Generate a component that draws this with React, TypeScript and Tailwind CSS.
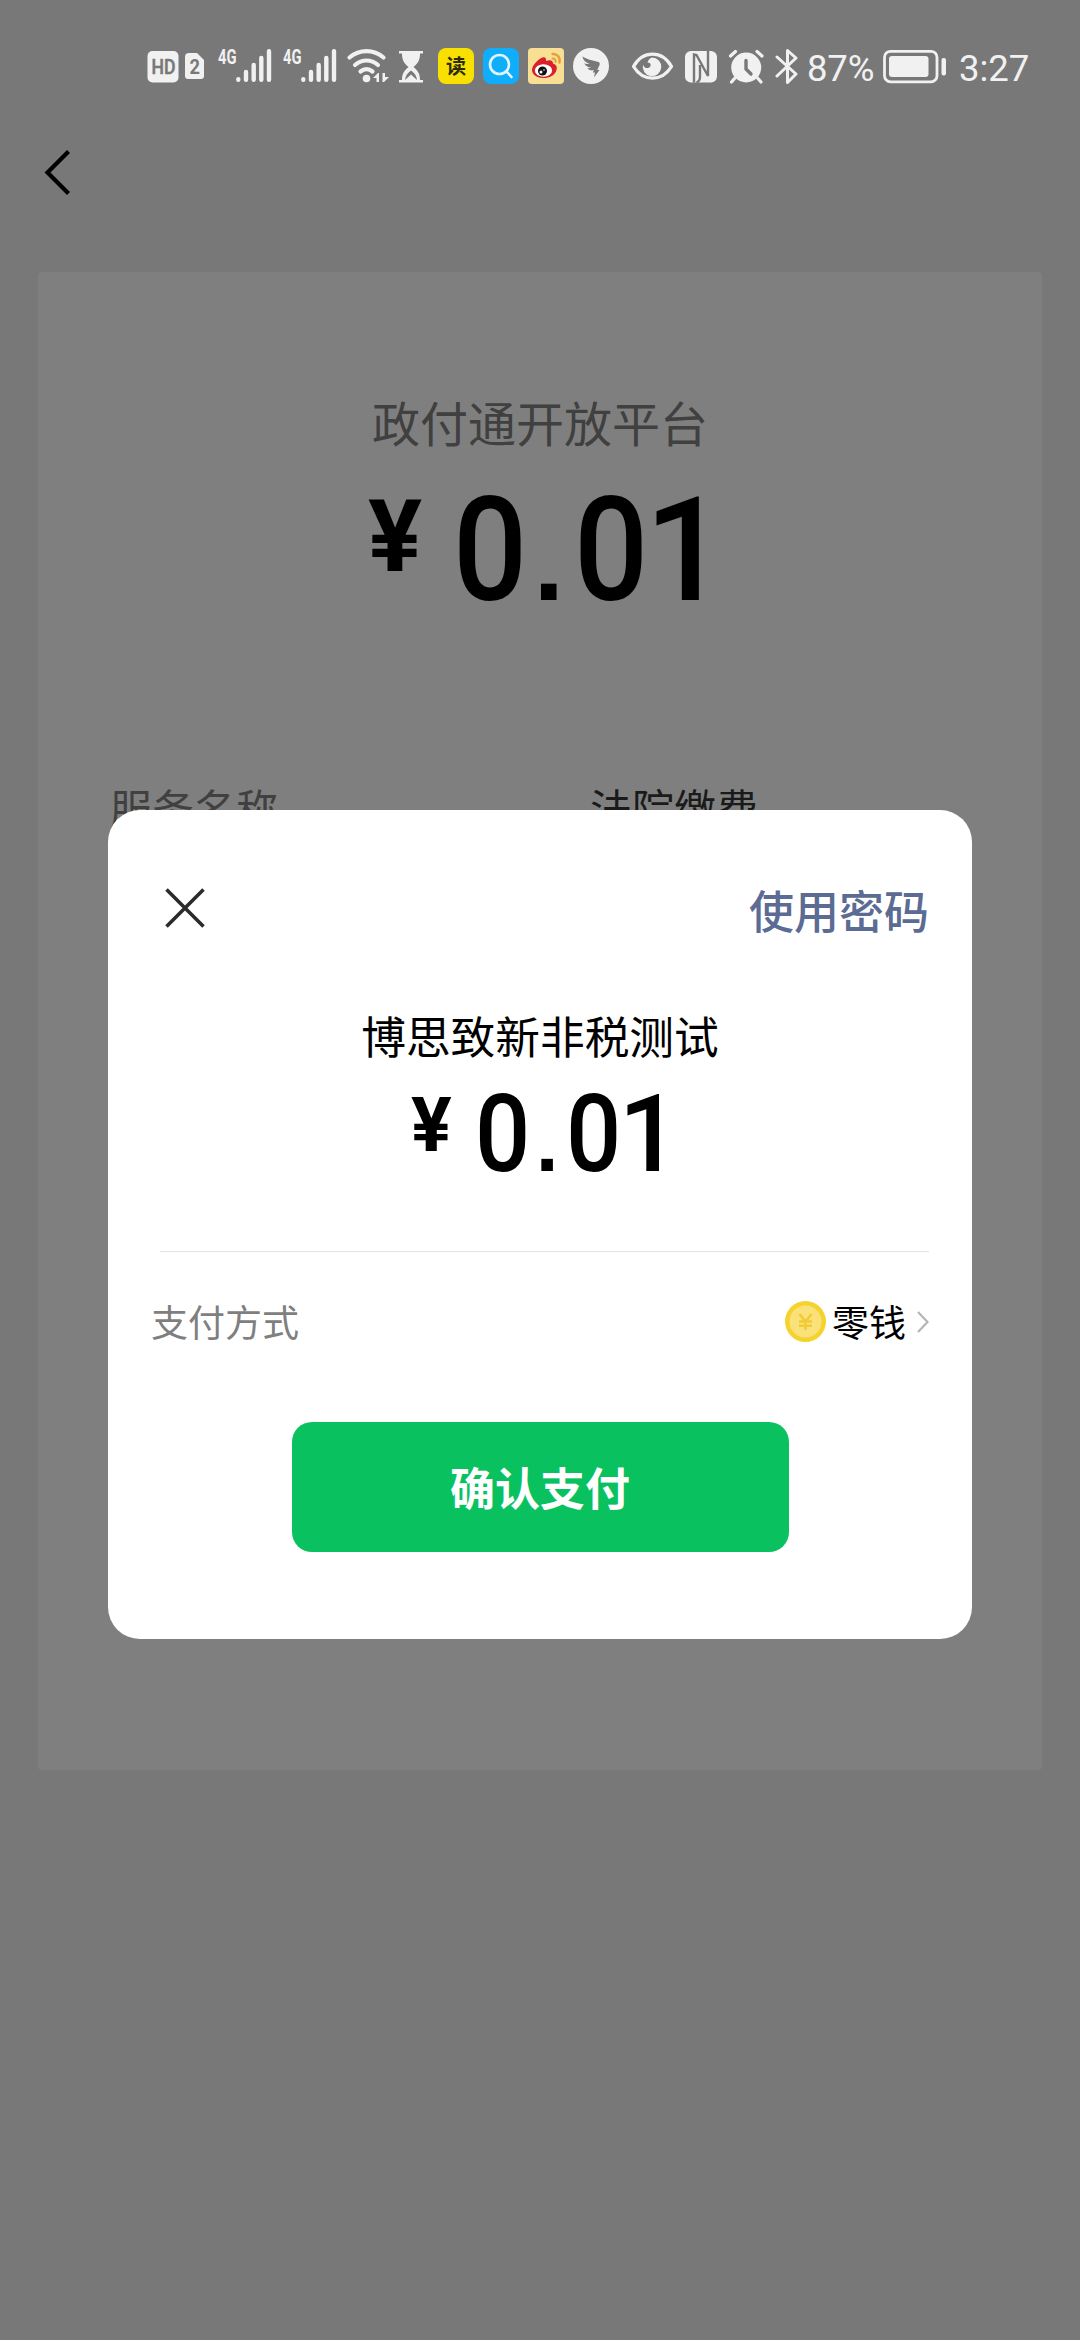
import type { ReactNode } from "react";

const cjk = "font-['Noto_Sans_CJK_SC',sans-serif]";
const latin = "font-[Roboto,'Noto_Sans',sans-serif]";

type IconProps = {
  className: string;
  box: string;
  children: ReactNode;
};

function StatusIcon({ className, box, children }: IconProps) {
  return (
    <svg className={`h-10 shrink-0 ${className}`} viewBox={box} fill="#f1f1f1">
      {children}
    </svg>
  );
}

function Signal({ className }: { className: string }) {
  return (
    <StatusIcon className={`w-[54px] ${className}`} box="0 0 54 40">
      <text
        x="0"
        y="18"
        fontSize="20"
        fontWeight="700"
        fontFamily="Roboto, sans-serif"
        textLength="18.5"
        lengthAdjust="spacingAndGlyphs"
      >
        4G
      </text>
      <g stroke="#f1f1f1" strokeWidth="4.4" strokeLinecap="round">
        <path d="M20.3 33.2v.6M28 26v7.8M35.7 19v14.8M43.3 12v21.8M51 5.3v28.5" />
      </g>
    </StatusIcon>
  );
}

function StatusBar() {
  return (
    <div className={`flex h-[120px] items-start pt-[46px] pl-[147px] text-[#f1f1f1] ${latin}`}>
      <StatusIcon className="w-8" box="0 0 32 40">
        <rect x="0.5" y="5" width="31" height="31.5" rx="5" />
        <text
          x="4.5"
          y="27.5"
          fontSize="19.5"
          fontWeight="500"
          fill="#787878"
          stroke="#787878"
          strokeWidth="0.5"
          textLength="24"
          lengthAdjust="spacingAndGlyphs"
        >
          HD
        </text>
      </StatusIcon>
      <StatusIcon className="ml-1.5 w-5" box="0 0 20 40">
        <path d="M4 7h8l7 7v16a3 3 0 0 1-3 3H3a3 3 0 0 1-3-3V11a4 4 0 0 1 4-4z" />
        <text x="4.5" y="27.8" fontSize="21" fontWeight="700" fill="#787878" textLength="10.5" lengthAdjust="spacingAndGlyphs">
          2
        </text>
      </StatusIcon>
      <Signal className="ml-[13px]" />
      <Signal className="ml-[11px]" />

      {/* wifi with traffic arrows */}
      <StatusIcon className="ml-[9px] w-11" box="0 0 44 40">
        <g fill="none" stroke="#f1f1f1" strokeWidth="4.2" strokeLinecap="round">
          <path d="M3.5 11.5C13.5 3 27.5 3 37.5 11.5" />
          <path d="M9 19c7-6 16-6 23 0" />
          <path d="M14.5 25.5c4-3.2 8-3.2 12 0" />
        </g>
        <circle cx="20.5" cy="32.5" r="3.8" />
        <path d="M27 32l5-5h1v9h-2.5v-4zM43 31l-5 5h-1.5v-9H39v4z" />
      </StatusIcon>

      {/* hourglass */}
      <StatusIcon className="ml-2 w-[26px]" box="0 0 26 40">
        <path d="M1 5h24v2.5h-3c0 6-1.5 9.5-6.5 13.5 5 4 6.5 7.500 6.500 13h3V36.500H1V34h3c0-5.500 1.500-9 6.500-13C5.500 17 4 13.500 4 7.500H1z" />
        <path d="M13 24.5c-3.5 2.5-5.5 5-6 9.5l6-5.5 6 5.5c-.5-4.5-2.5-7-6-9.5z" fill="#787878" />
      </StatusIcon>

      <div className={`mt-0.5 ml-3.5 flex size-9 items-center justify-center rounded-lg bg-[#f8e100] ${cjk}`}>
        <span className="text-[20px] leading-9 font-bold text-[#2b2b08]">读</span>
      </div>
      <div className="mt-0.5 ml-[9px] flex size-9 items-center justify-center rounded-lg bg-[#10adfa]">
        <svg className="size-9" viewBox="0 0 36 36" fill="none" stroke="#dff6ff" strokeWidth="2.6" strokeLinecap="round">
          <circle cx="16.5" cy="16.5" r="9.5" />
          <path d="M23.5 23.5l5 5.5" />
        </svg>
      </div>
      <div className="mt-0.5 ml-[9px] size-9 overflow-hidden rounded-[4px] bg-[#f9df93]">
        <svg className="size-9" viewBox="0 0 36 36">
          <path
            d="M14.5 9.5c2.5-1 4 .5 3.5 3.5 3-1.2 7-1.5 7 2.5 3 1 4.5 3 3.5 6.5C27 28 20 30.5 14.5 30 8.5 29.5 4 26.5 4 22c0-4.5 6-11 10.5-12.5z"
            fill="#d9202b"
          />
          <ellipse cx="15.5" cy="22.5" rx="8.6" ry="6.2" fill="#fff" />
          <circle cx="14.5" cy="23" r="4.5" fill="#111" />
          <circle cx="13" cy="24" r="1.5" fill="#fff" />
          <circle cx="16" cy="22" r=".8" fill="#fff" />
          <g fill="none" stroke="#e5a03a" strokeLinecap="round">
            <path d="M24.5 6c5-.5 8 3.5 7 8.500" strokeWidth="2.4" />
            <path d="M24.5 10.5c2.5 0 3.5 1.5 3 3.500" strokeWidth="1.9" />
          </g>
        </svg>
      </div>
      <svg className="mt-0.5 ml-[9px] size-9 shrink-0" viewBox="0 0 36 36">
        <circle cx="18" cy="18" r="18" fill="#f1f1f1" />
        <path
          d="M9.5 8.500c4 2.500 9.500 4 16 5.500 1.500.5 1.500 2 .8 3.500l-2 4.500h2.200l-5.500 7.500 1-5h-2.200l1-2.500c-3 .8-5 0-6.500-2 1.500.3 3 .2 4-.3-3.500-.5-6-2-7-4.500 2 .8 4 1 5.500.8C13 14.500 10.200 12.500 9.500 8.500z"
          fill="#787878"
        />
      </svg>

      {/* eye comfort */}
      <StatusIcon className="ml-[22px] w-[43px]" box="0 0 43 40">
        <path d="M2.5 20.5C12 4 31 4 40.5 20.5 31 36 12 36 2.5 20.5z" fill="none" stroke="#f1f1f1" strokeWidth="3.3" strokeLinejoin="round" />
        <path d="M21 11.5a9.3 9.3 0 1 1-9 7c1 3 3 4 5 3.5 2-.6 3-2 2.5-4-1-1.5-1.5-1.5-3-1 .5-3 2-4.5 4.5-5.5z" />
      </StatusIcon>

      {/* nfc */}
      <StatusIcon className="ml-2.5 w-[34px]" box="0 0 34 40">
        <rect x="1" y="5" width="32" height="31.5" rx="6" />
        <path
          d="M10 36.500V8.500L12.500 9l11.500 21V5M16 19v12q0 4-3.500 5.500"
          fill="none"
          stroke="#787878"
          strokeWidth="2.4"
        />
      </StatusIcon>

      {/* alarm */}
      <StatusIcon className="ml-2.5 w-9" box="0 0 36 40">
        <circle cx="18.2" cy="21.5" r="15" />
        <path d="M2.5 10l5-4.5M29 5.5l5 4.500M7 32l-3.500 4M29.500 32l3.500 4" stroke="#f1f1f1" strokeWidth="3.2" strokeLinecap="round" />
        <path d="M18 14.5v8.500l5 5" fill="none" stroke="#787878" strokeWidth="3.4" strokeLinecap="round" />
      </StatusIcon>

      {/* bluetooth */}
      <StatusIcon className="ml-[11px] w-6" box="0 0 24 40">
        <path d="M2 11l19 17-8.5 8.5V4.5L21 12 2 30" fill="none" stroke="#f1f1f1" strokeWidth="3" strokeLinejoin="round" strokeLinecap="round" />
      </StatusIcon>

      <span className="ml-2 w-[70px] text-[36.5px] leading-[46px] tracking-[-0.2px]">87%</span>
      <StatusIcon className="ml-1.5 w-[64px]" box="0 0 64 40">
        <rect x="1.5" y="5.3" width="52.5" height="30.5" rx="6" fill="none" stroke="#f1f1f1" strokeWidth="2.8" />
        <rect x="6" y="10" width="39.5" height="21" rx="3" />
        <rect x="58.5" y="12" width="4.5" height="17.5" rx="2" />
      </StatusIcon>
      <span className="ml-3 text-[36.5px] leading-[46px]">3:27</span>
    </div>
  );
}

function CoinIcon() {
  return (
    <svg className="size-[41px]" viewBox="0 0 41 41">
      <circle cx="20.5" cy="20.5" r="20.5" fill="#f5d32f" />
      <circle cx="20.5" cy="20.5" r="16" fill="#fbe17a" />
      <path d="M14.5 13l6 7.5 6-7.5M20.5 20.5V29M14 20.5h13M14 24.7h13" fill="none" stroke="#f1cb35" strokeWidth="2.4" />
    </svg>
  );
}

// narrow zeros and a square point, all on one baseline
function Amount() {
  return (
    <span className="ml-[-0.024em] flex items-baseline font-medium">
      <span className="scale-x-90">0</span>
      <span className="w-[0.27em] text-center font-['Liberation_Sans',sans-serif] font-bold">
        <span className="mr-[0.03em] text-[0.76em]">.</span>
      </span>
      <span className="scale-x-90">0</span>
      <span className="ml-[-0.055em]">1</span>
    </span>
  );
}

function PayDialog() {
  return (
    <div className="absolute top-[810px] left-[108px] flex h-[829px] w-[864px] flex-col rounded-[32px] bg-white">
      <div className="flex h-[199px] items-center justify-between pr-[43px] pl-[57px]">
        <svg className="mt-[-4px] size-10" viewBox="0 0 40 40" fill="none" stroke="#2b2b2b" strokeWidth="3.6">
          <path d="M1.5 1.5l37 37M38.5 1.5l-37 37" />
        </svg>
        <span className="text-[45px] leading-[60px] font-medium text-[#5b6b93]">使用密码</span>
      </div>
      <p className="text-center text-[44.7px] leading-[52px] text-black">博思致新非税测试</p>
      <div className={`flex h-[177px] items-start pt-[19px] pl-[303px] text-black ${latin}`}>
        <span className="mt-[7px] w-[40px] text-[76px] leading-[76px] font-bold">¥</span>
        <div className="ml-[24px] text-[108px] leading-[108px]">
          <Amount />
        </div>
      </div>
      <div className="mt-[13px] mr-[43px] ml-[52px] h-px bg-[#e3e3e3]" />
      <div className="flex h-[139px] items-center pr-[43px] pl-[43px] text-[37px]">
        <span className="text-[#7f7f7f]">支付方式</span>
        <span className="ml-auto">
          <CoinIcon />
        </span>
        <span className="ml-1.5 text-black">零钱</span>
        <svg className="ml-[11px] h-[22px] w-3" viewBox="0 0 12 22" fill="none" stroke="#b5b5b5" strokeWidth="2.2">
          <path d="M1 1l9.5 10L1 21" />
        </svg>
      </div>
      <button className="mt-[31px] h-[130px] w-[497px] self-center rounded-[20px] bg-[#0ac160] text-[45px] font-bold text-white">
        确认支付
      </button>
    </div>
  );
}

export default function App() {
  return (
    <div className={`relative h-[2340px] w-[1080px] overflow-hidden bg-[#787878] ${cjk}`}>
      <StatusBar />
      <div className="flex h-[152px] pt-[30px] pl-[44px]">
        <svg className="h-[45px] w-[27px]" viewBox="0 0 27 45" fill="none" stroke="#000" strokeWidth="4.2">
          <path d="M24.5 1.5L3.5 22.5l21 21" />
        </svg>
      </div>
      <div className="mx-[38px] h-[1498px] rounded-[4px] bg-[#7f7f7f] pt-[113px]">
        <p className="text-center text-[48px] leading-[72px] text-[#404040]">政付通开放平台</p>
        <div className={`flex h-[173px] items-start pt-[21px] pl-[330px] text-black ${latin}`}>
          <span className="mt-[8px] w-[54px] text-[101px] leading-[101px] font-bold">¥</span>
          <div className="ml-[30px] text-[145px] leading-[145px]">
            <Amount />
          </div>
        </div>
        <div className="mt-[147px] flex pl-[72px] text-[42px] leading-[60px]">
          <span className="w-[480px] text-[#404040]">服务名称</span>
          <span className="text-[#1a1a1a]">法院缴费</span>
        </div>
      </div>
      <PayDialog />
    </div>
  );
}
